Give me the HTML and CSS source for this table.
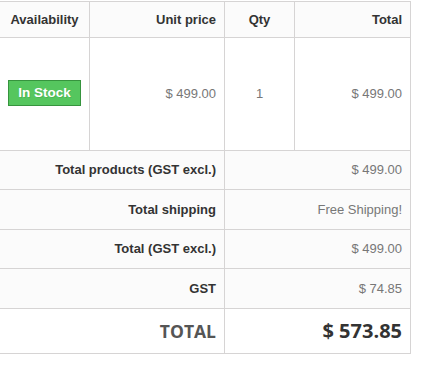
FILE: index.html
```html
<!DOCTYPE html>
<html>
<head>
<meta charset="utf-8">
<link rel="stylesheet" href="styles.css">
</head>
<body>
<table class="cart">
  <colgroup>
    <col class="c-avail">
    <col class="c-unit">
    <col class="c-qty">
    <col class="c-total">
  </colgroup>
  <thead>
    <tr class="head">
      <th class="center">Availability</th>
      <th class="right">Unit price</th>
      <th class="center">Qty</th>
      <th class="right">Total</th>
    </tr>
  </thead>
  <tbody>
    <tr class="item">
      <td class="center"><span class="label-stock">In Stock</span></td>
      <td class="right val">$ 499.00</td>
      <td class="center val">1</td>
      <td class="right val">$ 499.00</td>
    </tr>
  </tbody>
  <tfoot>
    <tr class="sum h39">
      <td colspan="2" class="right lbl">Total products (GST excl.)</td>
      <td colspan="2" class="right val">$ 499.00</td>
    </tr>
    <tr class="sum h40">
      <td colspan="2" class="right lbl">Total shipping</td>
      <td colspan="2" class="right val">Free Shipping!</td>
    </tr>
    <tr class="sum h39">
      <td colspan="2" class="right lbl">Total (GST excl.)</td>
      <td colspan="2" class="right val">$ 499.00</td>
    </tr>
    <tr class="sum h40">
      <td colspan="2" class="right lbl">GST</td>
      <td colspan="2" class="right val">$ 74.85</td>
    </tr>
    <tr class="grand">
      <td colspan="2" class="right grand-lbl">Total</td>
      <td colspan="2" class="right grand-val">$ 573.85</td>
    </tr>
  </tfoot>
</table>
</body>
</html>
```
FILE: styles.css
```css
html, body {
  margin: 0;
  padding: 0;
  background: #ffffff;
}
body {
  padding-top: 1px;
  font-family: "Liberation Sans", Arial, sans-serif;
  font-size: 13px;
  color: #777777;
}
.cart {
  border-collapse: separate;
  border-spacing: 0;
  table-layout: fixed;
  width: 411px;
  border-top: 1px solid #d6d4d4;
}
.c-avail { width: 90px; }
.c-unit { width: 135px; }
.c-qty { width: 70px; }
.c-total { width: 116px; }

.cart th,
.cart td {
  box-sizing: border-box;
  border-right: 1px solid #d6d4d4;
  border-bottom: 1px solid #d6d4d4;
  padding: 0 8px;
  vertical-align: middle;
  line-height: 18px;
}
.center { text-align: center; }
.right { text-align: right; }

.head th {
  height: 36px;
  background: #fbfbfb;
  color: #333333;
  font-weight: bold;
  font-size: 13px;
}
.item td {
  height: 113px;
  background: #ffffff;
}
.val {
  color: #777777;
  font-size: 13px;
}
.label-stock {
  display: inline-block;
  background: #55c65e;
  border: 1px solid #36943e;
  color: #ffffff;
  font-weight: bold;
  font-size: 13.5px;
  line-height: 18px;
  padding: 3px 9px;
  text-shadow: 1px 1px rgba(0, 0, 0, 0.1);
  margin-top: -2px;
}
.sum td {
  background: #fbfbfb;
}
.h39 td { height: 39px; }
.h40 td { height: 40px; }
.lbl {
  color: #333333;
  font-weight: bold;
}
.grand td {
  height: 45px;
  background: #ffffff;
}
.grand-lbl {
  font-family: "Open Sans", "Liberation Sans", sans-serif;
  font-weight: 700;
  font-size: 17.5px;
  text-transform: uppercase;
  color: #555555;
}
.grand-val {
  font-family: "Open Sans", "Liberation Sans", sans-serif;
  font-weight: 700;
  font-size: 20px;
  color: #333333;
}
```
